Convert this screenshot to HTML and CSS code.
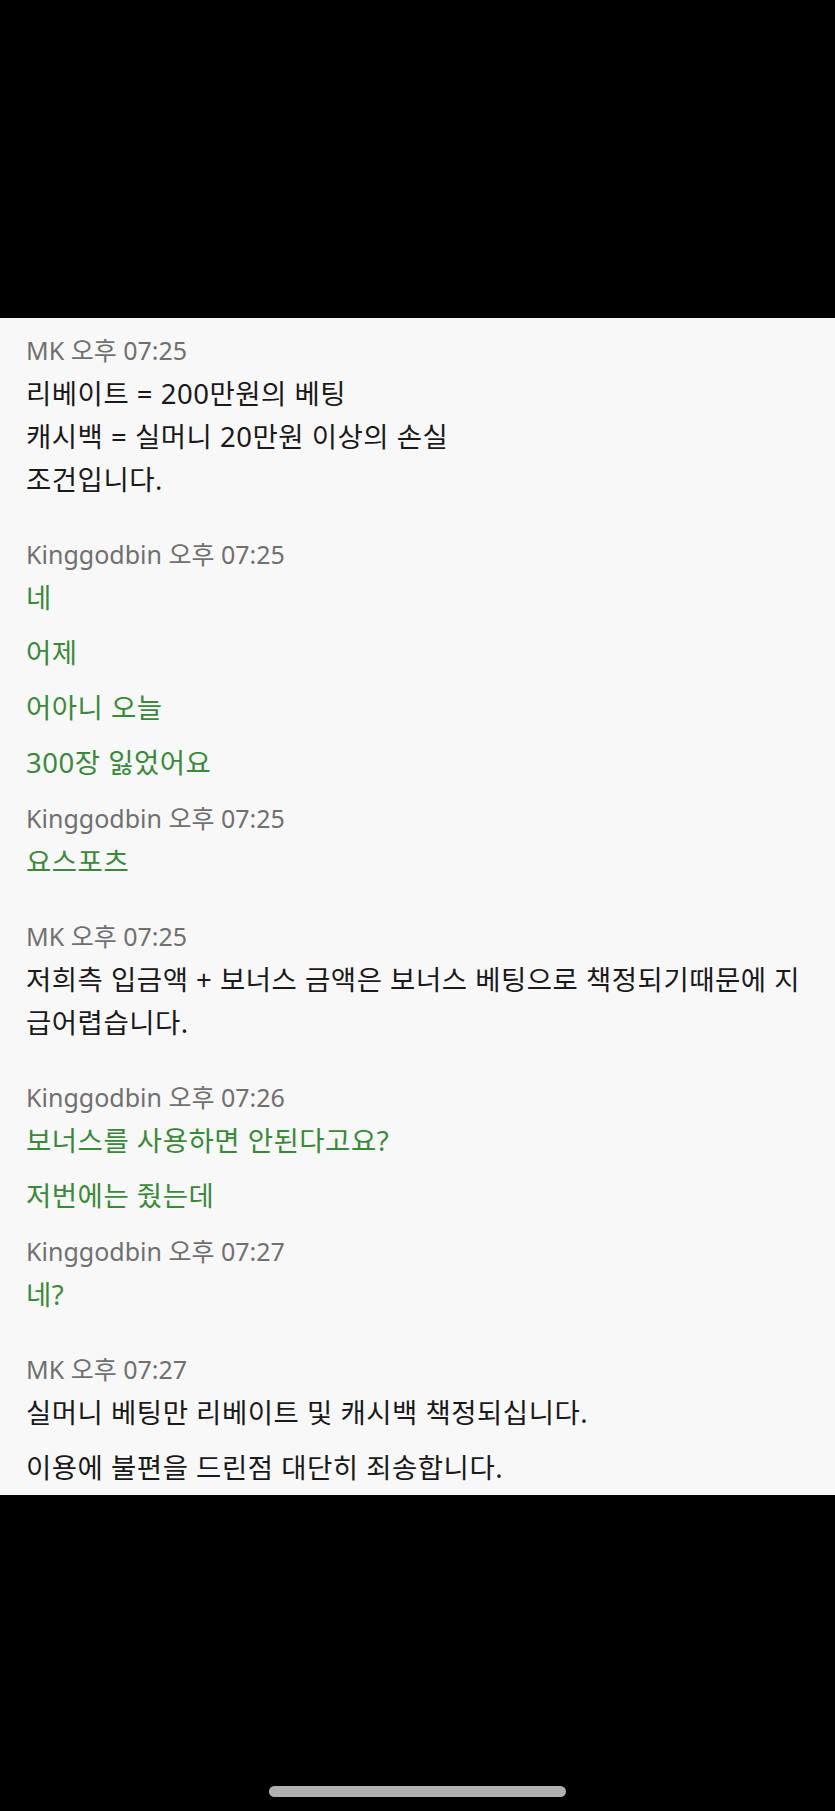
FILE: index.html
```html
<!DOCTYPE html>
<html lang="ko">
<head>
    <meta charset="UTF-8">
    <meta name="viewport" content="width=device-width, initial-scale=1.0">
    <title>채팅</title>
    <link rel="stylesheet" href="styles.css">
</head>
<body>
    <div class="status-bar"></div>

    <div class="chat">
        <div class="group">
            <div class="sender">MK 오후 07:25</div>
            <div class="msg">리베이트 = 200만원의 베팅<br>캐시백 = 실머니 20만원 이상의 손실<br>조건입니다.</div>
        </div>

        <div class="group mine">
            <div class="sender">Kinggodbin 오후 07:25</div>
            <div class="msg">네</div>
            <div class="msg">어제</div>
            <div class="msg">어아니 오늘</div>
            <div class="msg">300장 잃었어요</div>
        </div>

        <div class="group mine same">
            <div class="sender">Kinggodbin 오후 07:25</div>
            <div class="msg">요스포츠</div>
        </div>

        <div class="group">
            <div class="sender">MK 오후 07:25</div>
            <div class="msg">저희측 입금액 + 보너스 금액은 보너스 베팅으로 책정되기때문에 지급어렵습니다.</div>
        </div>

        <div class="group mine">
            <div class="sender">Kinggodbin 오후 07:26</div>
            <div class="msg">보너스를 사용하면 안된다고요?</div>
            <div class="msg">저번에는 줬는데</div>
        </div>

        <div class="group mine same">
            <div class="sender">Kinggodbin 오후 07:27</div>
            <div class="msg">네?</div>
        </div>

        <div class="group">
            <div class="sender">MK 오후 07:27</div>
            <div class="msg">실머니 베팅만 리베이트 및 캐시백 책정되십니다.</div>
            <div class="msg">이용에 불편을 드린점 대단히 죄송합니다.</div>
        </div>
    </div>

    <div class="nav-bar">
        <div class="home-bar"></div>
    </div>
</body>
</html>
```

FILE: styles.css
```css
body {
    margin: 0;
    background-color: #000;
    font-family: "Noto Sans", "Noto Sans CJK KR", sans-serif;
}
.status-bar {
    height: 318px;
    background-color: #000;
}
.chat {
    background-color: #f8f8f8;
    padding: 16px 26px 0 26px;
}
.group {
    margin-top: 31px;
}
.group:first-child {
    margin-top: 0;
}
.group.same {
    margin-top: 12px;
}
.sender {
    font-size: 25px;
    line-height: 32px;
    color: #707070;
}
.msg {
    font-size: 27.5px;
    letter-spacing: 0.5px;
    line-height: 43px;
    padding: 6px 0;
    color: #1a1a1a;
}
.mine .msg {
    color: #388a38;
}
.nav-bar {
    height: 319px;
    display: flex;
    justify-content: center;
    align-items: flex-end;
}
.home-bar {
    width: 297px;
    height: 11px;
    margin-bottom: 17px;
    border-radius: 6px;
    background-color: #b0b0b0;
}
```
